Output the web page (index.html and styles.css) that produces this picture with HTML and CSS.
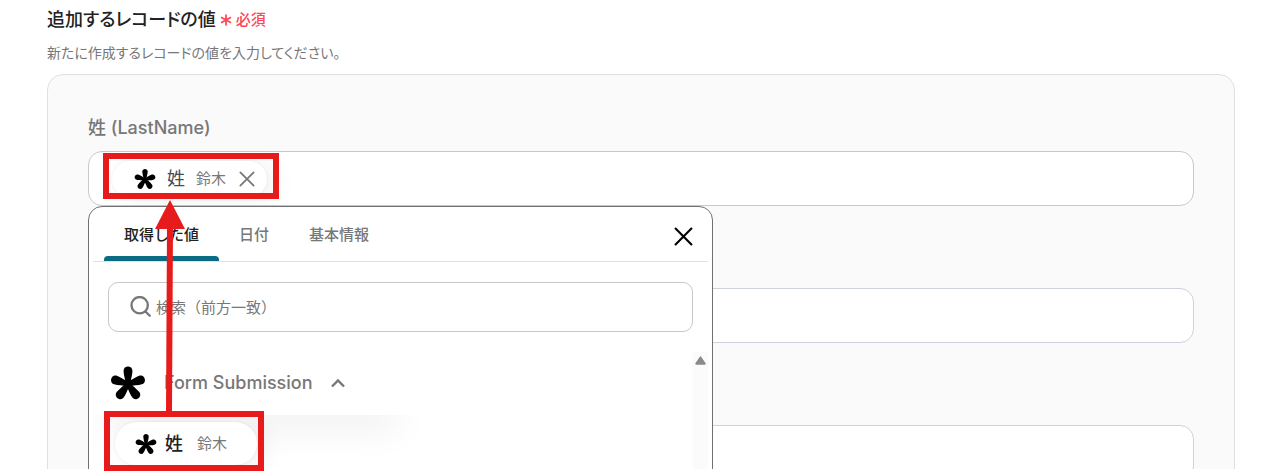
FILE: index.html
```html
<!DOCTYPE html>
<html lang="ja">
<head>
    <meta charset="UTF-8">
    <meta name="viewport" content="width=device-width, initial-scale=1.0">
    <title>追加するレコードの値</title>
    <link rel="stylesheet" href="styles.css">
</head>
<body>
    <!-- アイコン定義 -->
    <svg class="icon-defs" aria-hidden="true">
        <symbol id="icon-aster" viewBox="0 0 34 34">
            <path id="petal" d="M15 18.5 C14.6 14 12.8 9 12.8 5.6 C12.8 0 21.2 0 21.2 5.6 C21.2 9 19.4 14 19 18.5 Z"/>
            <use href="#petal" transform="rotate(72 17 18)"/>
            <use href="#petal" transform="rotate(144 17 18)"/>
            <use href="#petal" transform="rotate(216 17 18)"/>
            <use href="#petal" transform="rotate(288 17 18)"/>
        </symbol>
        <symbol id="icon-close" viewBox="0 0 18 18">
            <path d="M1.5 1.5 L16.5 16.5 M16.5 1.5 L1.5 16.5" fill="none" stroke="currentColor" stroke-width="2" stroke-linecap="round"/>
        </symbol>
    </svg>

    <main class="page">
        <h1 class="title">追加するレコードの値
            <span class="required">
                <svg class="required-mark" viewBox="0 0 12 12"><path d="M6 0.5 V11.5 M1 3.2 L11 8.8 M11 3.2 L1 8.8" stroke="currentColor" stroke-width="1.8"/></svg>
                必須
            </span>
        </h1>
        <p class="description">新たに作成するレコードの値を入力してください。</p>

        <section class="panel">
            <label class="field-label" for="last-name">姓 (LastName)</label>
            <div class="field">
                <div class="chip chip-selected">
                    <svg class="chip-icon"><use href="#icon-aster"/></svg>
                    <span class="chip-name">姓</span>
                    <span class="chip-value">鈴木</span>
                    <button class="chip-remove" type="button" aria-label="削除"><svg><use href="#icon-close"/></svg></button>
                </div>
                <input class="field-input" id="last-name" type="text">

                <!-- 値の選択メニュー -->
                <div class="dropdown">
                    <div class="tabs">
                        <button class="tab active" type="button">取得した値</button>
                        <button class="tab" type="button">日付</button>
                        <button class="tab" type="button">基本情報</button>
                        <button class="dropdown-close" type="button" aria-label="閉じる"><svg><use href="#icon-close"/></svg></button>
                    </div>
                    <label class="search">
                        <svg class="search-icon" viewBox="0 0 20 20"><path d="M17 8.8 A7.8 7.8 0 1 1 1.4 8.8 A7.8 7.8 0 1 1 17 8.8 M14.5 14.5 L18.8 18.8" fill="none" stroke="currentColor" stroke-width="2.2" stroke-linecap="round"/></svg>
                        <input class="search-input" type="text" placeholder="検索（前方一致）" aria-label="検索">
                    </label>
                    <div class="results">
                        <div class="results-body">
                            <button class="group" type="button">
                                <svg class="group-icon"><use href="#icon-aster"/></svg>
                                <span>Form Submission</span>
                                <svg class="chevron" viewBox="0 0 14 10"><path d="M1 8.5 L7 2.5 L13 8.5" fill="none" stroke="currentColor" stroke-width="2.4"/></svg>
                            </button>
                            <div class="options">
                                <button class="chip chip-option" type="button">
                                    <svg class="chip-icon"><use href="#icon-aster"/></svg>
                                    <span class="chip-name">姓</span>
                                    <span class="chip-value">鈴木</span>
                                </button>
                            </div>
                        </div>
                        <div class="scrollbar">
                            <svg viewBox="0 0 10 8"><path d="M5 1 L9 7 H1 Z" fill="#8a8a8a" stroke="#8a8a8a" stroke-width="1.5" stroke-linejoin="round"/></svg>
                        </div>
                    </div>
                </div>
            </div>
            <input class="field field-plain" type="text" aria-label="値">
            <input class="field field-plain" type="text" aria-label="値">
        </section>
    </main>

    <!-- 操作説明の赤枠と矢印 -->
    <svg class="guide" width="300" height="472" aria-hidden="true">
        <g fill="none" stroke="#e71b1b" stroke-width="6">
            <rect x="106" y="156" width="170" height="40"/>
            <rect x="107" y="414" width="154" height="54"/>
            <path d="M169 412 L170 225"/>
        </g>
        <path d="M170 200 L185 229 H155 Z" fill="#e71b1b"/>
    </svg>
</body>
</html>
```

FILE: styles.css
```css
* {
    margin: 0;
    padding: 0;
    box-sizing: border-box;
}

body {
    font-family: Inter, "Noto Sans CJK JP", sans-serif;
    background-color: #fff;
    color: #222;
}

button {
    font-family: inherit;
    border: none;
    background: none;
    cursor: pointer;
}

input {
    font-family: inherit;
    outline: none;
}

svg {
    display: block;
}

.icon-defs {
    position: absolute;
    width: 0;
    height: 0;
}

.page {
    height: calc(100vh - 3px);
    padding: 8px 35px 0 47px;
    overflow: hidden;
}

/* 見出し */
.title {
    display: flex;
    align-items: center;
    gap: 4px;
    font-size: 18px;
    font-weight: 500;
    line-height: 24px;
    font-feature-settings: "palt";
}

.required {
    display: flex;
    align-items: center;
    gap: 4px;
    font-size: 15px;
    color: #ff4757;
}

.required-mark {
    width: 12px;
    height: 12px;
}

.description {
    margin-top: 10px;
    font-size: 14px;
    line-height: 22px;
    color: #777;
    font-feature-settings: "palt";
}

/* 入力パネル */
.panel {
    margin-top: 10px;
    padding: 41px 40px 40px;
    border: 1px solid #dfe0e3;
    border-radius: 16px;
    background-color: #fafafa;
}

.field-label {
    display: block;
    margin-bottom: 11px;
    font-size: 18px;
    font-weight: 500;
    line-height: 24px;
    color: #777;
}

.field {
    position: relative;
    display: flex;
    align-items: center;
    width: 100%;
    height: 55px;
    padding: 0 23px;
    border: 1px solid #c8c8c8;
    border-radius: 14px;
    background-color: #fff;
}

.field-plain {
    margin-top: 82px;
    border-color: #ced2da;
}

.field-input {
    flex: 1;
    border: none;
    background: none;
}

/* 値チップ */
.chip {
    display: flex;
    align-items: center;
    border-radius: 22px;
    background-color: #fff;
    box-shadow: 0 0 3px rgba(0, 0, 0, 0.08), 10px 4px 24px rgba(0, 0, 0, 0.06);
}

.chip-icon {
    width: 22px;
    height: 22px;
}

.chip-name {
    font-size: 18px;
    line-height: 24px;
    color: #444b55;
}

.chip-value {
    font-size: 15px;
    line-height: 24px;
    color: #777;
}

.chip-selected {
    height: 36px;
    padding: 0 12px 0 22px;
    gap: 11px;
}

.chip-remove {
    padding-left: 2px;
}

.chip-remove svg {
    width: 16px;
    height: 16px;
    color: #777;
}

.chip-option {
    position: relative;
    height: 43px;
    padding: 0 30px 0 20px;
    gap: 8px;
}

.chip-option .chip-name {
    margin-right: 6px;
    font-weight: 500;
    color: #222;
}

/* 選択メニュー */
.dropdown {
    position: absolute;
    z-index: 1;
    top: 54px;
    left: -1px;
    width: 625px;
    max-width: 100%;
    padding: 0 4px;
    border: 1px solid #707070;
    border-radius: 14px;
    background-color: #fff;
}

.tabs {
    display: flex;
    height: 55px;
    padding: 0 15px 0 11px;
    border-bottom: 1px solid #e2e2e2;
}

.tab {
    padding: 0 20px 2px;
    font-size: 15px;
    font-weight: 500;
    color: #777;
}

.tab.active {
    position: relative;
    color: #222;
}

.tab.active::after {
    content: "";
    position: absolute;
    left: 0;
    right: 0;
    bottom: 0;
    height: 5px;
    border-radius: 4px 4px 0 0;
    background-color: #0a6b84;
}

.dropdown-close {
    margin-left: auto;
    padding-top: 4px;
}

.dropdown-close svg {
    width: 19px;
    height: 19px;
    color: #000;
}

.search {
    display: flex;
    align-items: center;
    gap: 5px;
    height: 50px;
    margin: 20px 15px;
    padding: 0 21px;
    border: 1px solid #c8c8c8;
    border-radius: 10px;
}

.search-icon {
    width: 21px;
    height: 21px;
    margin-bottom: 2px;
    color: #777;
}

.search-input {
    flex: 1;
    border: none;
    font-size: 15px;
}

.search-input::placeholder {
    color: #777;
}

.results {
    display: flex;
    height: 240px;
}

.results-body {
    flex: 1;
}

.group {
    display: flex;
    align-items: center;
    gap: 18px;
    height: 63px;
    padding: 0 0 2px 17px;
    font-size: 18px;
    font-weight: 500;
    color: #777;
}

.group-icon {
    width: 36px;
    height: 36px;
}

.group-icon,
.chip-icon {
    fill: #000;
}

.chevron {
    width: 14px;
    height: 10px;
}

.options {
    height: 170px;
    padding: 0 22px;
    overflow: hidden;
}

/* 見出し行の下に落ちる影 */
.options::before {
    content: "";
    display: block;
    width: 270px;
    margin-bottom: 7px;
    box-shadow: 0 0 36px 12px rgba(0, 0, 0, 0.08);
}

.scrollbar {
    width: 15px;
    padding: 4px 2px;
    background-color: #fbfbfb;
}

.scrollbar svg {
    width: 11px;
    height: 9px;
}

/* 説明用の注釈 */
.guide {
    position: absolute;
    z-index: 2;
    top: 0;
    left: 0;
    pointer-events: none;
}
```
